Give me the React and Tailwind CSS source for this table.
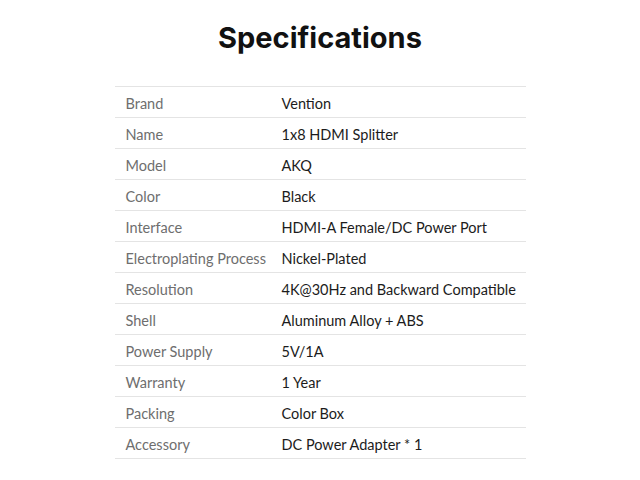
const specs = [
  ['Brand', 'Vention'],
  ['Name', '1x8 HDMI Splitter'],
  ['Model', 'AKQ'],
  ['Color', 'Black'],
  ['Interface', 'HDMI-A Female/DC Power Port'],
  ['Electroplating Process', 'Nickel-Plated'],
  ['Resolution', '4K@30Hz and Backward Compatible'],
  ['Shell', 'Aluminum Alloy + ABS'],
  ['Power Supply', '5V/1A'],
  ['Warranty', '1 Year'],
  ['Packing', 'Color Box'],
  ['Accessory', 'DC Power Adapter * 1'],
]

export default function App() {
  return (
    <div className="w-[640px] h-[480px] bg-white flex flex-col items-center">
      <h1 className="mt-[18px] h-[40px] font-['Inter',sans-serif] text-[29px] leading-[40px] font-bold text-[#111]">
        Specifications
      </h1>
      <div className="mt-[28px] w-[411px] border-t border-[#e4e4e4] font-['Lato',sans-serif]">
        {specs.map(([k, v]) => (
          <div key={k} className="flex h-[31px] items-center pt-[3px] border-b border-[#e4e4e4] text-[14.5px]">
            <span className="w-[167px] shrink-0 pl-[11px] text-[#6e6e6e]">{k}</span>
            <span className="whitespace-nowrap text-[#1c1c1c]">{v}</span>
          </div>
        ))}
      </div>
    </div>
  )
}
